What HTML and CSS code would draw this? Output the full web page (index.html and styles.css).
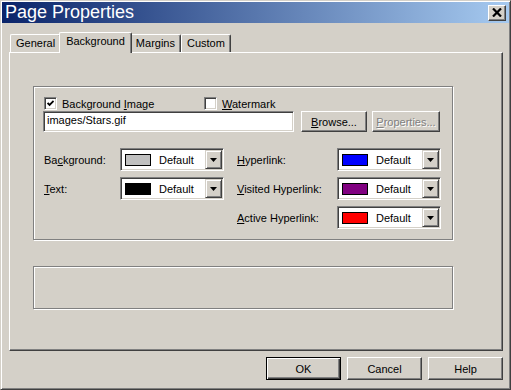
FILE: index.html
```html
<!DOCTYPE html>
<html lang="en">
<head>
    <meta charset="UTF-8">
    <title>Page Properties</title>
    <link rel="stylesheet" href="styles.css">
</head>
<body>
    <div class="window">
        <div class="titlebar">
            <span class="title">Page Properties</span>
            <button class="close">
                <svg width="10" height="9" viewBox="0 0 10 9"><path d="M1 0.5l8 8M9 0.5l-8 8" stroke="#000" stroke-width="2.2"/></svg>
            </button>
        </div>

        <div class="content">
            <div class="tabs">
                <div class="tab">General</div>
                <div class="tab active">Background</div>
                <div class="tab">Margins</div>
                <div class="tab">Custom</div>
            </div>

            <div class="panel">
                <div class="group main">
                    <div class="checks">
                        <label class="check first">
                            <span class="box"><svg width="7" height="7" viewBox="0 0 7 7"><path d="M0.6 3l2 2 4-4" fill="none" stroke="#000" stroke-width="1.8"/></svg></span>
                            <span>Background <u>I</u>mage</span>
                        </label>
                        <label class="check">
                            <span class="box"></span>
                            <span><u>W</u>atermark</span>
                        </label>
                    </div>

                    <div class="file-row">
                        <div class="field">images/Stars.gif</div>
                        <button class="btn browse"><u>B</u>rowse...</button>
                        <button class="btn props" disabled><u>P</u>roperties...</button>
                    </div>

                    <div class="colors">
                        <div class="color-col left">
                            <span class="label">Ba<u>c</u>kground:</span>
                            <div class="combo"><span class="swatch" style="background:#c0c0c0"></span><span class="value">Default</span><span class="drop"><svg width="7" height="4" viewBox="0 0 7 4"><path d="M0 0h7L3.5 4z"/></svg></span></div>
                            <span class="label"><u>T</u>ext:</span>
                            <div class="combo"><span class="swatch" style="background:#000000"></span><span class="value">Default</span><span class="drop"><svg width="7" height="4" viewBox="0 0 7 4"><path d="M0 0h7L3.5 4z"/></svg></span></div>
                        </div>
                        <div class="color-col right">
                            <span class="label"><u>H</u>yperlink:</span>
                            <div class="combo"><span class="swatch" style="background:#0000ff"></span><span class="value">Default</span><span class="drop"><svg width="7" height="4" viewBox="0 0 7 4"><path d="M0 0h7L3.5 4z"/></svg></span></div>
                            <span class="label"><u>V</u>isited Hyperlink:</span>
                            <div class="combo"><span class="swatch" style="background:#800080"></span><span class="value">Default</span><span class="drop"><svg width="7" height="4" viewBox="0 0 7 4"><path d="M0 0h7L3.5 4z"/></svg></span></div>
                            <span class="label"><u>A</u>ctive Hyperlink:</span>
                            <div class="combo"><span class="swatch" style="background:#ff0000"></span><span class="value">Default</span><span class="drop"><svg width="7" height="4" viewBox="0 0 7 4"><path d="M0 0h7L3.5 4z"/></svg></span></div>
                        </div>
                    </div>
                </div>

                <div class="group empty"></div>
            </div>

            <div class="actions">
                <button class="btn wide default">OK</button>
                <button class="btn wide">Cancel</button>
                <button class="btn wide">Help</button>
            </div>
        </div>
    </div>
</body>
</html>
```

FILE: styles.css
```css
body {
    margin: 0;
    background: #ffffff;
    font-family: "Liberation Sans", Arial, sans-serif;
    font-size: 11px;
    color: #000;
}
.window {
    width: 511px;
    height: 390px;
    box-sizing: border-box;
    background: #d4d0c8;
    border: 1px solid;
    border-color: #d4d0c8 #404040 #404040 #d4d0c8;
    box-shadow: inset 1px 1px #fff, inset -1px -1px #808080;
    padding: 1px;
    display: flex;
    flex-direction: column;
}
.titlebar {
    height: 21px;
    display: flex;
    align-items: center;
    justify-content: space-between;
    padding: 0 3px;
    background: linear-gradient(to right, #0a246a, #a6caf0);
    color: #fff;
}
.title {
    font-size: 18px;
    line-height: 21px;
}
.close {
    width: 18px;
    height: 16px;
    padding: 0;
    box-sizing: border-box;
    display: flex;
    align-items: center;
    justify-content: center;
    background: #d4d0c8;
    border: 1px solid;
    border-color: #fff #404040 #404040 #fff;
    box-shadow: inset -1px -1px #808080;
}
.content {
    flex: 1;
    display: flex;
    flex-direction: column;
    padding: 9px 6px 0 7px;
}

/* tabs */
.tabs {
    height: 20px;
    display: flex;
    align-items: flex-end;
    padding-left: 1px;
    position: relative;
    z-index: 1;
}
.tab {
    height: 18px;
    box-sizing: border-box;
    padding: 0 5px;
    line-height: 17px;
    background: #d4d0c8;
    border: 1px solid;
    border-bottom: none;
    border-color: #fff #404040 #404040 #fff;
    box-shadow: inset -1px 0 #808080;
    border-radius: 2px 2px 0 0;
}
.tab.active {
    height: 21px;
    margin: 0 -2px -1px;
    padding: 0 6px;
    line-height: 16px;
    position: relative;
    z-index: 1;
}
.panel {
    height: 299px;
    box-sizing: border-box;
    border: 1px solid;
    border-color: #fff #404040 #404040 #fff;
    box-shadow: inset -1px -1px #808080;
    padding: 33px 0 0 23px;
}

/* group boxes */
.group {
    width: 420px;
    box-sizing: border-box;
    border: 1px solid #808080;
    box-shadow: inset 1px 1px #fff, 1px 1px #fff;
}
.group.main {
    height: 154px;
    padding: 10px 0 0 9px;
}
.group.empty {
    height: 43px;
    margin-top: 26px;
}
.checks {
    height: 13px;
    display: flex;
    margin-left: 1px;
}
.check {
    display: flex;
    align-items: center;
    gap: 5px;
}
.check.first {
    width: 160px;
}
.box {
    width: 13px;
    height: 13px;
    box-sizing: border-box;
    display: flex;
    align-items: center;
    justify-content: center;
    background: #fff;
    border: 1px solid;
    border-color: #808080 #fff #fff #808080;
    box-shadow: inset 1px 1px #404040, inset -1px -1px #d4d0c8;
}
.file-row {
    display: flex;
    margin-top: 1px;
}
.field {
    width: 251px;
    height: 21px;
    box-sizing: border-box;
    padding: 0 3px;
    line-height: 17px;
    background: #fff;
    border: 1px solid;
    border-color: #808080 #fff #fff #808080;
    box-shadow: inset 1px 1px #404040, inset -1px -1px #d4d0c8;
}
.btn {
    height: 21px;
    box-sizing: border-box;
    padding: 0;
    font-family: "Liberation Sans", Arial, sans-serif;
    font-size: 11px;
    color: #000;
    background: #d4d0c8;
    border: 1px solid;
    border-color: #fff #404040 #404040 #fff;
    box-shadow: inset -1px -1px #808080;
}
.browse {
    width: 66px;
    margin-left: 7px;
}
.props {
    width: 68px;
    margin-left: 5px;
    color: #808080;
    text-shadow: 1px 1px #fff;
}

/* colour pickers */
.colors {
    display: flex;
    gap: 13px;
    margin: 16px 0 0 1px;
}
.color-col {
    display: grid;
    grid-auto-rows: 23px;
    row-gap: 6px;
    align-items: center;
}
.color-col.left {
    grid-template-columns: 76px 104px;
}
.color-col.right {
    grid-template-columns: 100px 104px;
}
.combo {
    height: 23px;
    box-sizing: border-box;
    display: flex;
    align-items: center;
    padding: 1px;
    background: #fff;
    border: 1px solid;
    border-color: #808080 #fff #fff #808080;
    box-shadow: inset 1px 1px #404040, inset -1px -1px #d4d0c8;
}
.swatch {
    width: 26px;
    height: 12px;
    box-sizing: border-box;
    margin-left: 3px;
    border: 1px solid #000;
}
.value {
    margin-left: 8px;
}
.drop {
    width: 17px;
    height: 19px;
    box-sizing: border-box;
    margin-left: auto;
    display: flex;
    align-items: center;
    justify-content: center;
    background: #d4d0c8;
    border: 1px solid;
    border-color: #d4d0c8 #404040 #404040 #d4d0c8;
    box-shadow: inset 1px 1px #fff, inset -1px -1px #808080;
}

/* dialog buttons */
.actions {
    display: flex;
    justify-content: flex-end;
    gap: 6px;
    margin-top: 6px;
}
.btn.wide {
    width: 75px;
    height: 23px;
}
.btn.default {
    border-color: #000;
    box-shadow: inset 1px 1px #fff, inset -1px -1px #404040, inset -2px -2px #808080;
}
```
